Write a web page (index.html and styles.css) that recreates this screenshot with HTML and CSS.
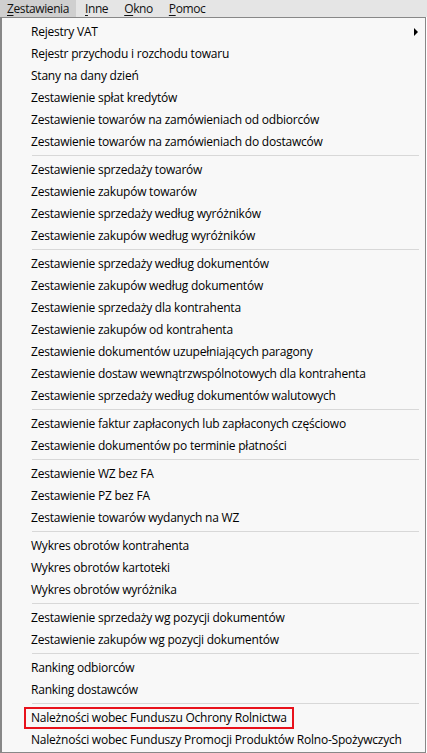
FILE: index.html
```html
<!DOCTYPE html>
<html lang="pl">
<head>
<meta charset="utf-8">
<link rel="stylesheet" href="styles.css">
</head>
<body>
<div class="menubar">
  <span class="top-item active"><u>Z</u>estawienia</span>
  <span class="top-item"><u>I</u>nne</span>
  <span class="top-item"><u>O</u>kno</span>
  <span class="top-item"><u>P</u>omoc</span>
</div>
<div class="menu">
  <div class="item has-sub">Rejestry VAT<span class="arrow"></span></div>
  <div class="item">Rejestr przychodu i rozchodu towaru</div>
  <div class="item">Stany na dany dzień</div>
  <div class="item">Zestawienie spłat kredytów</div>
  <div class="item">Zestawienie towarów na zamówieniach od odbiorców</div>
  <div class="item">Zestawienie towarów na zamówieniach do dostawców</div>
  <div class="sep"></div>
  <div class="item">Zestawienie sprzedaży towarów</div>
  <div class="item">Zestawienie zakupów towarów</div>
  <div class="item">Zestawienie sprzedaży według wyróżników</div>
  <div class="item">Zestawienie zakupów według wyróżników</div>
  <div class="sep"></div>
  <div class="item">Zestawienie sprzedaży według dokumentów</div>
  <div class="item">Zestawienie zakupów według dokumentów</div>
  <div class="item">Zestawienie sprzedaży dla kontrahenta</div>
  <div class="item">Zestawienie zakupów od kontrahenta</div>
  <div class="item">Zestawienie dokumentów uzupełniających paragony</div>
  <div class="item">Zestawienie dostaw wewnątrzwspólnotowych dla kontrahenta</div>
  <div class="item">Zestawienie sprzedaży według dokumentów walutowych</div>
  <div class="sep"></div>
  <div class="item">Zestawienie faktur zapłaconych lub zapłaconych częściowo</div>
  <div class="item">Zestawienie dokumentów po terminie płatności</div>
  <div class="sep"></div>
  <div class="item">Zestawienie WZ bez FA</div>
  <div class="item">Zestawienie PZ bez FA</div>
  <div class="item">Zestawienie towarów wydanych na WZ</div>
  <div class="sep"></div>
  <div class="item">Wykres obrotów kontrahenta</div>
  <div class="item">Wykres obrotów kartoteki</div>
  <div class="item">Wykres obrotów wyróżnika</div>
  <div class="sep"></div>
  <div class="item">Zestawienie sprzedaży wg pozycji dokumentów</div>
  <div class="item">Zestawienie zakupów wg pozycji dokumentów</div>
  <div class="sep"></div>
  <div class="item">Ranking odbiorców</div>
  <div class="item">Ranking dostawców</div>
  <div class="sep"></div>
  <div class="item"><span class="highlight">Należności wobec Funduszu Ochrony Rolnictwa</span></div>
  <div class="item">Należności wobec Funduszy Promocji Produktów Rolno-Spożywczych</div>
</div>
</body>
</html>
```
FILE: styles.css
```css
html, body {
  margin: 0;
  padding: 0;
  background: #ffffff;
}
body {
  width: 427px;
  height: 753px;
  overflow: hidden;
  font-family: "Open Sans", "Noto Sans", sans-serif;
  font-size: 12px;
  letter-spacing: -0.22px;
  color: #000;
}
.menubar {
  height: 17px;
  background: #e5e5e5;
  display: flex;
  align-items: center;
  gap: 2px;
}
.top-item {
  padding: 0 7px;
  height: 17px;
  line-height: 17px;
  color: #111;
  letter-spacing: -0.4px;
}
.top-item.active {
  background: #cfcfcf;
  width: 76px;
  box-sizing: border-box;
  padding-right: 0;
}
.top-item u {
  text-decoration-thickness: 1px;
  text-underline-offset: 2px;
}
.menu {
  width: 426px;
  height: 736px;
  background: #f8f8f8;
  border: 1px solid #888;
  border-left: 2px solid #888;
  padding: 3px 0 0 0;
  box-sizing: border-box;
  display: flex;
  flex-direction: column;
  overflow: hidden;
}
.item {
  flex-shrink: 0;
  height: 22px;
  line-height: 22px;
  padding-left: 29px;
  position: relative;
  white-space: nowrap;
}
.sep {
  flex-shrink: 0;
  height: 1px;
  background: #d8d8d8;
  margin: 2px 6px 3px 30px;
}
.arrow {
  position: absolute;
  right: 7px;
  top: 7px;
  width: 0;
  height: 0;
  border-top: 4px solid transparent;
  border-bottom: 4px solid transparent;
  border-left: 4px solid #000;
}
.highlight {
  display: inline-block;
  vertical-align: top;
  box-sizing: border-box;
  height: 22px;
  margin-left: -7px;
  padding: 0 5px;
  line-height: 18px;
  border: 2px solid #e8121c;
}
```
